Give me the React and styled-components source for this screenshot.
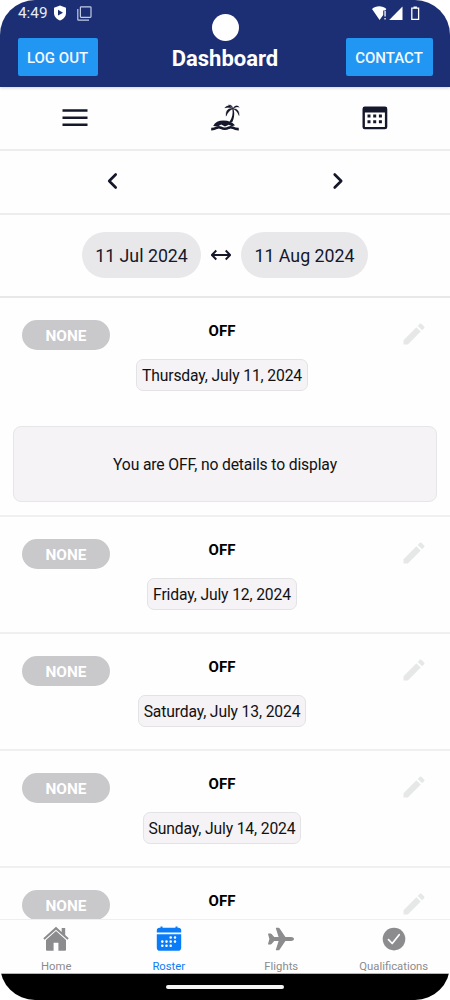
import styled, { createGlobalStyle } from "styled-components"
import { MdEdit } from "react-icons/md"

const days = [
    { id: 1, date: "Thursday, July 11, 2024", details: "You are OFF, no details to display" },
    { id: 2, date: "Friday, July 12, 2024" },
    { id: 3, date: "Saturday, July 13, 2024" },
    { id: 4, date: "Sunday, July 14, 2024" },
    { id: 5 },
]

function ShieldIcon() {
    return (
        <svg width="14" height="16" viewBox="0 0 14 16">
            <path d="M7 .5 13 2.8V8c0 3.500-2.500 6.200-6 7.500C3.500 14.200 1 11.500 1 8V2.800Z" fill="#fff" />
            <path d="M5 4.800 10 7.700 5 10.600Z" fill="#1c2f74" />
        </svg>
    )
}

function CopyIcon() {
    return (
        <svg width="15" height="15" viewBox="0 0 15 15" fill="none" stroke="#c3cce6" strokeWidth="1.2">
            <rect x="3.400" y=".8" width="10.600" height="10.600" rx=".8" />
            <path d="M.8 3v10.500c0 .4.300.7.700.7H12" />
        </svg>
    )
}

function SignalIcons() {
    return (
        <svg width="48" height="15" viewBox="0 0 48 15">
            <path d="M0 3C3.800-.6 10.600-.6 14.400 3L13.200 4.500H11.200V9L7.600 14Z" fill="#fff" />
            <path d="M12.400 5h1.300v5.500h-1.300ZM12.400 12h1.300v1.600h-1.300Z" fill="#fff" />
            <path d="M17.200 14 30.500.5V14Z" fill="#fff" />
            <path d="M39.800 2.200h6.800v11.100h-6.800Z" fill="none" stroke="#fff" strokeWidth="1.300" />
            <path d="M41.500.4h3.400v1.800h-3.400Z" fill="#fff" />
        </svg>
    )
}

function MenuIcon() {
    return (
        <svg width="26" height="18" viewBox="0 0 26 18">
            <path d="M.5 1.500h25M.5 8.700h25M.5 15.700h25" stroke="#15172b" strokeWidth="2.600" />
        </svg>
    )
}

function IslandIcon() {
    return (
        <svg width="30" height="28" viewBox="0 0 30 28">
            <path d="M3.200 22C5 18.300 8.500 16.500 13.500 16.500c5 0 9 1.700 11.500 4.800l-3 1-3.300-1.500-3.700 1.800-3.800-2-3.500 2Z" fill="#15172b" />
            <path d="M1.200 25.100c2.800.1 3.800-.4 5.800-1.400 1.500-.7 2.200-.7 3.700 0 3 1.500 5.200 1.500 8.200 0 1.500-.7 2.200-.7 3.700 0 2 1 3.200 1.500 6.200 1.400" fill="none" stroke="#15172b" strokeWidth="2.600" />
            <path d="M23.300 4.500c1.700 4.300 1 10-1.200 14l-2.600-.8C22.300 14 23.200 9.500 22.300 4.500Z" fill="#15172b" />
            <path d="M23 4.700C21.300 1.200 17 .8 14.800 3.900c3-.9 5.300-.6 8.200.8ZM23 4.700C18.300 3.500 15.500 6.700 16.100 12.200c1.500-3.600 3.400-6.200 6.900-7.500ZM23 4.700c1.500-3.300 4.300-3.700 6.300-1.400-2.400-.7-4.200-.1-6.300 1.400ZM23 4.700c4.200-.6 6.500 2.500 6.100 7C27.800 8.300 26.200 6.200 23 4.700ZM22.200 4.600C21 3 20.200 1.700 18.300 1c2.700-.4 4.200.8 4.700 3.700Z" fill="#15172b" stroke="#15172b" strokeWidth=".3" />
        </svg>
    )
}

function CalendarIcon() {
    return (
        <svg width="26" height="24" viewBox="0 0 26 24">
            <rect x="1.700" y="1.700" width="22.400" height="20.400" rx="1.200" fill="#fff" stroke="#15172b" strokeWidth="2.400" />
            <path d="M1 1.500h24v4.900H1Z" fill="#15172b" />
            <path d="M5.500 8.500h3v3h-3ZM11.200 8.500h3v3h-3ZM16.900 8.500h3v3h-3ZM5.500 14.200h3v3h-3ZM11.200 14.200h3v3h-3ZM16.900 14.200h3v3h-3Z" fill="#15172b" />
        </svg>
    )
}

function Chevron({ d }) {
    return (
        <svg width="12" height="18" viewBox="0 0 12 18">
            <path d={d} fill="none" stroke="#15172b" strokeWidth="2.600" strokeLinecap="round" strokeLinejoin="round" />
        </svg>
    )
}

function RangeIcon() {
    return (
        <svg width="20" height="12" viewBox="0 0 20 12">
            <path d="M1.200 6h17.600M5.300 1.500.9 6l4.400 4.500M14.700 1.500 19.100 6l-4.400 4.500" fill="none" stroke="#15172b" strokeWidth="1.900" strokeLinejoin="round" />
        </svg>
    )
}

function HomeIcon() {
    return (
        <svg width="26" height="26" viewBox="0 0 26 26">
            <path d="M13 .8.3 12.300l1.300 1.500L13 3.700l11.400 10.100 1.300-1.500-3.500-3.200V2h-3.500v3.900Z" fill="currentColor" />
            <path d="M13 5.100 3 13.900v9.500c0 .9.500 1.400 1.400 1.400h6.200v-8.100h4.800v8.100h6.200c.9 0 1.400-.5 1.400-1.400v-9.500Z" fill="currentColor" />
        </svg>
    )
}

function RosterIcon() {
    return (
        <svg width="26" height="26" viewBox="0 0 26 26">
            <path d="M.8 6.600V4.500c0-1.700 1.100-2.700 2.700-2.700h1V.5h2v1.300h13V.5h2v1.300h1c1.600 0 2.700 1 2.700 2.700v2.100Z" fill="currentColor" />
            <path d="M.8 8.300h24.400v13.400c0 1.900-1.200 3.100-3.100 3.100H3.900c-1.900 0-3.100-1.200-3.100-3.100Z" fill="currentColor" />
            <path d="M14.700 11.500h0M19 11.500h0M6.300 15.600h0M10.500 15.600h0M14.700 15.600h0M19 15.600h0M6.300 19.800h0M10.500 19.800h0M14.700 19.800h0" stroke="#fff" strokeWidth="2.600" strokeLinecap="round" />
        </svg>
    )
}

function FlightsIcon() {
    return (
        <svg width="26" height="26" viewBox="0 0 26 26">
            <path d="M0 8c0-.4.200-.6.600-.6h2c.4 0 .7.200 1 .5l2.600 3.100h4.400L7.900 2.600c-.2-.5.100-.9.700-.9h1.900c.4 0 .8.200 1 .6l5.900 8.700h5.600c1.600 0 3 .8 3 2s-1.400 2-3 2h-5.600l-5.900 8.700c-.2.400-.6.600-1 .6H8.600c-.6 0-.9-.4-.7-.9L10.600 15H6.200l-2.600 3.100c-.3.300-.6.500-1 .5h-2c-.4 0-.6-.2-.6-.6L1.400 13Z" fill="currentColor" />
        </svg>
    )
}

function QualificationsIcon() {
    return (
        <svg width="26" height="26" viewBox="0 0 26 26">
            <circle cx="13" cy="13.100" r="11.300" fill="currentColor" />
            <path d="m7.500 13.700 3.700 3.800 7-8.800" fill="none" stroke="#fff" strokeWidth="1.700" strokeLinecap="round" strokeLinejoin="round" />
        </svg>
    )
}

const tabs = [
    { name: "Home", icon: <HomeIcon /> },
    { name: "Roster", icon: <RosterIcon />, active: true },
    { name: "Flights", icon: <FlightsIcon /> },
    { name: "Qualifications", icon: <QualificationsIcon /> },
]

function App() {
    return (
        <Phone>
            <GlobalStyle />
            <Header>
                <StatusBar>
                    <StatusLeft>
                        <Clock>4:49</Clock>
                        <ShieldIcon />
                        <CopyIcon />
                    </StatusLeft>
                    <SignalIcons />
                </StatusBar>
                <Camera />
                <TitleBar>
                    <HeaderButton $width={80}>LOG OUT</HeaderButton>
                    <Title>Dashboard</Title>
                    <HeaderButton $width={87}>CONTACT</HeaderButton>
                </TitleBar>
            </Header>
            <ViewBar>
                <MenuIcon />
                <IslandIcon />
                <CalendarIcon />
            </ViewBar>
            <ArrowBar>
                <Chevron d="M8.700 2.500 2.200 9l6.500 6.500" />
                <Chevron d="M2.700 2.500 9.200 9l-6.500 6.500" />
            </ArrowBar>
            <RangeBar>
                <RangeDate $width={119}>11 Jul 2024</RangeDate>
                <RangeIcon />
                <RangeDate $width={127}>11 Aug 2024</RangeDate>
            </RangeBar>
            <DayList>
                {days.map((day) => (
                    <Day key={day.id} $open={!!day.details}>
                        <DayRow>
                            <DutyBadge>NONE</DutyBadge>
                            <DayInfo>
                                <DayStatus>OFF</DayStatus>
                                {day.date && <DayDate>{day.date}</DayDate>}
                            </DayInfo>
                            <EditIcon />
                        </DayRow>
                        {day.details && <Details>{day.details}</Details>}
                    </Day>
                ))}
            </DayList>
            <TabBar>
                {tabs.map((tab) => (
                    <Tab key={tab.name} $active={tab.active}>
                        {tab.icon}
                        <TabName>{tab.name}</TabName>
                    </Tab>
                ))}
            </TabBar>
            <SystemBar>
                <SystemHandle />
            </SystemBar>
        </Phone>
    )
}

export default App

const GlobalStyle = createGlobalStyle`
    * {
        box-sizing: border-box;
    }
    body {
        margin: 0;
        background: #fff;
        font-family: Roboto, sans-serif;
    }
    svg {
        display: block;
        flex: none;
    }
`

const Phone = styled.div`
    display: flex;
    flex-direction: column;
    width: 450px;
    height: 1000px;
    border-radius: 35px;
    overflow: hidden;
    background: #fefefe;
`

const Header = styled.header`
    position: relative;
    flex: none;
    height: 87px;
    background: #1c2f74;
    box-shadow: 0 1px 3px rgba(0, 0, 0, 0.18);
    color: #fff;
`

const StatusBar = styled.div`
    display: flex;
    justify-content: space-between;
    align-items: center;
    height: 26px;
    padding: 0 30px 0 18px;
`

const StatusLeft = styled.div`
    display: flex;
    align-items: center;
`

const Clock = styled.span`
    width: 35px;
    font-size: 15.3px;
    color: #e8ebf5;

    & + svg {
        margin-right: 10px;
    }
`

const Camera = styled.div`
    position: absolute;
    top: 14px;
    left: 212px;
    width: 27px;
    height: 27px;
    border-radius: 50%;
    background: #fff;
`

const TitleBar = styled.div`
    display: grid;
    grid-template-columns: 87px 1fr 87px;
    align-items: center;
    padding: 12px 17.500px 0;
`

const HeaderButton = styled.button`
    width: ${(props) => props.$width}px;
    height: 38px;
    padding: 0;
    border: 0;
    border-radius: 2px;
    background: #2196f3;
    color: #f4faff;
    font: 500 15px/40px Roboto, sans-serif;
`

const Title = styled.h1`
    margin: 3px 0 0;
    text-align: center;
    font-size: 22px;
    line-height: 26px;
    font-weight: 700;
`

const Bar = styled.div`
    flex: none;
    border-bottom: 2px solid #ededee;
`

const ViewBar = styled(Bar)`
    display: grid;
    grid-template-columns: repeat(3, 1fr);
    justify-items: center;
    align-items: center;
    height: 64px;
    padding-bottom: 1px;
`

const ArrowBar = styled(Bar)`
    display: grid;
    grid-template-columns: 1fr 1fr;
    justify-items: center;
    align-items: center;
    height: 64px;
    padding-bottom: 3px;
`

const RangeBar = styled(Bar)`
    display: flex;
    justify-content: center;
    align-items: center;
    gap: 10px;
    height: 83px;
    padding-bottom: 1px;
    border-color: #e8e8e9;
`

const RangeDate = styled.div`
    width: ${(props) => props.$width}px;
    height: 46px;
    border-radius: 23px;
    background: #e8e8eb;
    color: #15172b;
    font-size: 17.800px;
    line-height: 47px;
    text-align: center;
`

const DayList = styled.main`
    flex: 1;
    min-height: 0;
    overflow: hidden;
`

const Day = styled.section`
    height: ${(props) => (props.$open ? 219 : 117)}px;
    padding: 22px 13px 0;
    border-bottom: 2px solid #f1f0f1;
`

const DayRow = styled.div`
    display: grid;
    grid-template-columns: 88px 1fr 28px;
    align-items: start;
    padding: 0 9px;
`

const DutyBadge = styled.div`
    height: 30px;
    border-radius: 15px;
    background: #c9c8cb;
    color: #fff;
    font-size: 15.400px;
    font-weight: 700;
    line-height: 32px;
    text-align: center;
`

const DayInfo = styled.div`
    display: flex;
    flex-direction: column;
    align-items: center;
    padding-right: 66px;
`

const DayStatus = styled.div`
    margin-top: 2px;
    color: #000;
    font-size: 15px;
    font-weight: 700;
    line-height: 19px;
`

const DayDate = styled.div`
    height: 32px;
    margin-top: 18px;
    padding: 0 5px;
    border: 1px solid #e3e3e5;
    border-radius: 7px;
    background: #f5f3f6;
    color: #111;
    font-size: 15.700px;
    letter-spacing: -0.14px;
    line-height: 31px;
    white-space: nowrap;
`

const EditIcon = styled(MdEdit)`
    width: 28px;
    height: 28px;
    color: #e6e8e8;
`

const Details = styled.div`
    height: 76px;
    margin-top: 35px;
    border: 1px solid #e6e6e8;
    border-radius: 8px;
    background: #f5f3f6;
    color: #111;
    font-size: 15.700px;
    letter-spacing: -0.14px;
    line-height: 75px;
    text-align: center;
`

const TabBar = styled.nav`
    flex: none;
    display: grid;
    grid-template-columns: repeat(4, 1fr);
    height: 55px;
    padding-top: 6px;
    border-top: 1px solid #efefef;
    border-bottom: 1px solid #b5b5b5;
    background: #fefefe;
`

const Tab = styled.div`
    display: flex;
    flex-direction: column;
    align-items: center;
    color: ${(props) => (props.$active ? "#0a7cf8" : "#8c8b8e")};
`

const TabName = styled.span`
    margin-top: 8px;
    font-size: 11.300px;
    line-height: 14px;
`

const SystemBar = styled.footer`
    flex: none;
    display: flex;
    justify-content: center;
    height: 26px;
    padding-top: 11px;
    background: #000;
`

const SystemHandle = styled.div`
    width: 118px;
    height: 4px;
    border-radius: 2px;
    background: #f5f5f5;
`
